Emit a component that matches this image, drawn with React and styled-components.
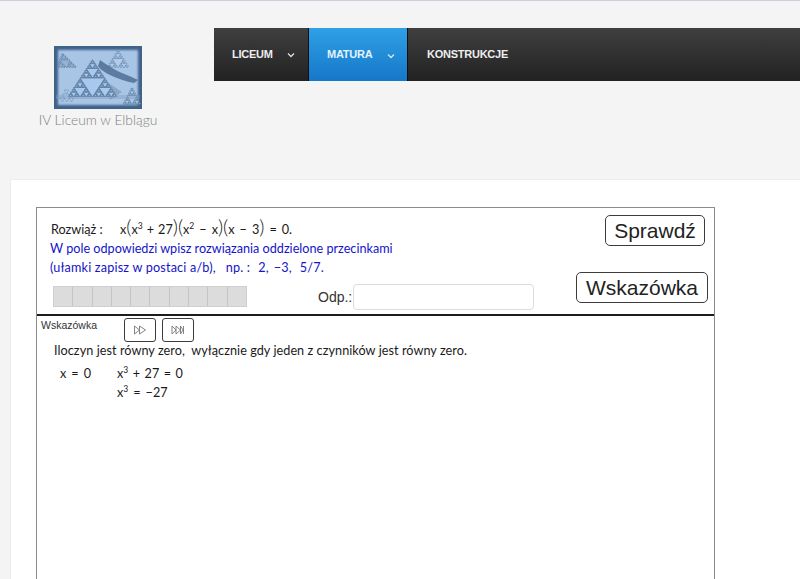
import React from "react";
import styled, { createGlobalStyle } from "styled-components";

const Global = createGlobalStyle`
  html, body { margin: 0; padding: 0; height: 579px; overflow: hidden; background: #f4f4f4; }
  #root { height: 579px; overflow: hidden; }
  * { box-sizing: border-box; }
`;

const Page = styled.div`
  width: 800px;
  height: 579px;
  border-top: 1px solid #c9d0dc;
  display: flex;
  flex-direction: column;
  overflow: hidden;
`;
const Header = styled.header`
  height: 178px;
  flex: none;
  display: flex;
  align-items: flex-start;
`;
const Brand = styled.div`
  width: 196px;
  flex: none;
  padding-top: 45px;
  display: flex;
  flex-direction: column;
  align-items: center;
`;
const LogoSvg = styled.svg`
  display: block;
  width: 88px;
  height: 63px;
`;
const BrandName = styled.div`
  font-family: Lato, sans-serif;
  font-weight: 300;
  font-size: 13.8px;
  line-height: 20px;
  color: #808080;
  white-space: nowrap;
  margin-top: 1px;
`;
const Nav = styled.nav`
  margin: 27px 0 0 18px;
  flex: 1;
  height: 53px;
  display: flex;
  background: linear-gradient(#3f3f3f, #222);
`;
const NavItem = styled.div`
  width: ${(p) => p.$w}px;
  flex: none;
  display: flex;
  align-items: center;
  padding-left: ${(p) => p.$pl}px;
  font-family: "Liberation Sans", Arial, sans-serif;
  font-weight: 700;
  font-size: 11px;
  letter-spacing: -0.25px;
  color: ${(p) => (p.$active ? "#e4f2ff" : "#eeeeee")};
  background: ${(p) => (p.$active ? "linear-gradient(#2fa0e6, #1677c9)" : "transparent")};
  border-right: ${(p) => (p.$sep ? "1px solid #0d0d0d" : "none")};
  padding-bottom: 1px;
`;
const Chevron = styled.svg`
  width: 8px;
  height: 6px;
  margin-left: ${(p) => p.$ml}px;
  margin-top: ${(p) => p.$mt}px;
  flex: none;
`;
const Content = styled.main`
  flex: 1;
  margin-left: 10px;
  background: #fff;
  border-top: 1px solid #ececec;
  border-left: 1px solid #ececec;
  padding: 27px 0 0 25px;
  min-height: 0;
`;
const Applet = styled.section`
  width: 679px;
  height: 420px;
  border: 1px solid #8c8c8c;
  display: flex;
  flex-direction: column;
  background: #fff;
`;
const Top = styled.div`
  height: 108px;
  flex: none;
  display: flex;
  border-bottom: 2px solid #1c1c1c;
`;
const Question = styled.div`
  width: 497px;
  flex: none;
  padding: 12px 0 0 13px;
  display: flex;
  flex-direction: column;
`;
const MathFont = styled.div`
  font-family: Lato, "Open Sans", sans-serif;
  font-size: 12.650px;
  line-height: 19px;
  height: 19px;
  white-space: pre;
  color: #1a1a1a;
`;
const Statement = styled(MathFont)`
  display: flex;
  align-items: baseline;
  margin-left: 1px;
`;
const Label = styled.span`
  width: 69px;
  flex: none;
`;
const Blue = styled(MathFont)`
  color: #1414c8;
  letter-spacing: ${(p) => p.$ls ?? 0}px;
`;
const Paren = styled.span`
  font-size: 20px;
  font-weight: 300;
  line-height: 10px;
`;
const Sup = styled.sup`
  font-size: 8.500px;
  line-height: 0;
  vertical-align: 5px;
`;
const Op = styled.span`
  margin: 0 ${(p) => p.$m ?? 3}px;
`;
const Gap = styled.span`
  margin-left: ${(p) => p.$w}px;
`;
const AnswerRow = styled.div`
  display: flex;
  align-items: center;
  margin: 7px 0 0 3px;
  height: 26px;
`;
const Cells = styled.div`
  display: flex;
  width: 194px;
  height: 21px;
  margin-bottom: 1px;
  flex: none;
  background: #dcdcdc;
  border: 1px solid #cfcfcf;
`;
const Cell = styled.div`
  flex: 1;
  border-right: 1px solid #c4c4c4;
  &:last-child { border-right: none; }
`;
const OdpLabel = styled.label`
  margin-left: 71px;
  width: 35px;
  font-family: "Liberation Sans", Arial, sans-serif;
  font-size: 14px;
  color: #333;
  flex: none;
`;
const AnswerInput = styled.div`
  width: 181px;
  height: 26px;
  flex: none;
  background: #fff;
  border: 1px solid #dcdcdc;
  border-radius: 4px;
`;
const Actions = styled.div`
  flex: 1;
  display: flex;
  flex-direction: column;
  align-items: flex-end;
  padding-top: 7px;
  gap: 26px;
`;
const BigButton = styled.div`
  width: ${(p) => p.$w}px;
  height: 31px;
  margin-right: ${(p) => p.$mr}px;
  border: 1px solid #3c3c3c;
  border-radius: 5px;
  background: #fff;
  font-family: "Liberation Sans", Arial, sans-serif;
  font-size: 21px;
  line-height: 29px;
  text-align: center;
  color: #222;
`;
const Hint = styled.div`
  flex: 1;
  padding: 2px 0 0 4px;
`;
const HintBar = styled.div`
  display: flex;
  align-items: flex-start;
  height: 23px;
`;
const HintTitle = styled.div`
  width: 83px;
  flex: none;
  font-family: "Liberation Sans", Arial, sans-serif;
  font-size: 10.500px;
  line-height: 13px;
  color: #333;
  padding-top: 1px;
`;
const StepButton = styled.div`
  width: ${(p) => p.$w}px;
  height: 24px;
  margin-right: 6px;
  border: 1px solid #3c3c3c;
  border-radius: 3px;
  display: flex;
  align-items: center;
  justify-content: center;
  flex: none;
`;
const Body = styled.div`
  padding: 0 0 0 13px;
`;
const Sentence = styled(MathFont)`
  height: 20px;
  line-height: 20px;
  margin-bottom: 3px;
  letter-spacing: 0.06px;
`;
const Work = styled.div`
  display: flex;
  padding-left: 6px;
`;
const WorkCol = styled.div`
  width: ${(p) => p.$w}px;
  flex: none;
  display: flex;
  flex-direction: column;
`;

const sierpinski = (ax, ay, bx, by, cx, cy, depth, out = []) => {
  const abx = (ax + bx) / 2, aby = (ay + by) / 2;
  const bcx = (bx + cx) / 2, bcy = (by + cy) / 2;
  const cax = (cx + ax) / 2, cay = (cy + ay) / 2;
  out.push(`M${abx} ${aby}L${bcx} ${bcy}L${cax} ${cay}Z`);
  if (depth > 1) {
    sierpinski(ax, ay, abx, aby, cax, cay, depth - 1, out);
    sierpinski(abx, aby, bx, by, bcx, bcy, depth - 1, out);
    sierpinski(cax, cay, bcx, bcy, cx, cy, depth - 1, out);
  }
  return out;
};

const Fractal = ({ pts, depth, fill, opacity }) => (
  <path
    d={sierpinski(...pts, depth).join("")}
    fill={fill}
    stroke="#54779c"
    strokeWidth="0.7"
    opacity={opacity}
  />
);

const Logo = () => (
  <LogoSvg viewBox="0 0 88 63">
    <defs>
      <filter id="soft" x="-5%" y="-5%" width="110%" height="110%"><feGaussianBlur stdDeviation="0.6" /></filter>
      <filter id="edge" x="-5%" y="-5%" width="110%" height="110%"><feGaussianBlur stdDeviation="1.100" /></filter>
      <clipPath id="inner"><rect width="88" height="63" /></clipPath>
    </defs>
    <g clipPath="url(#inner)">
      <rect width="88" height="63" fill="#3f6288" />
      <rect x="4" y="4" width="80" height="55" fill="#a8c5e6" filter="url(#edge)" />
      <g filter="url(#soft)">
        <Fractal pts={[64, 3, 52, 22, 76, 22]} depth={3} fill="#b4cfeb" opacity={0.7} />
        <Fractal pts={[8, 6, 2, 22, 24, 22]} depth={3} fill="#8fadcc" opacity={0.8} />
        <Fractal pts={[78, 40, 68, 59, 88, 59]} depth={3} fill="#a8c5e6" opacity={0.9} />
        <Fractal pts={[12, 40, 4, 56, 22, 56]} depth={2} fill="#b4cfeb" opacity={0.55} />
        <path d="M46 14Q60 24 68 27T84 34L80 37Q66 34 56 29T44 20Z" fill="#48698e" opacity="0.8" />
        <path d="M50 34L68 46L56 54Z" fill="#7997b7" opacity="0.65" />
        <path d="M2 49H86V53H2Z" fill="#7f9dbd" opacity="0.45" />
        <path d="M38.500 13L13.500 51H63.500Z" fill="#7693b4" />
        <Fractal pts={[38.5, 13, 13.5, 51, 63.5, 51]} depth={4} fill="#a9c9ec" />
      </g>
    </g>
  </LogoSvg>
);

const Down = ({ color = "#ddd", ml, mt = 0 }) => (
  <Chevron viewBox="0 0 8 6" $ml={ml} $mt={mt}>
    <path d="M1 1.500L4 4.500L7 1.500" fill="none" stroke={color} strokeWidth="1.300" />
  </Chevron>
);

const Play = () => (
  <svg width="14" height="10" viewBox="0 0 14 10" fill="none" stroke="#777" strokeWidth="0.9">
    <path d="M1.500 1V9L6.500 5ZM6.500 1V9L12.500 5Z" />
  </svg>
);
const PlayEnd = () => (
  <svg width="14" height="10" viewBox="0 0 14 10" fill="none" stroke="#777" strokeWidth="0.9">
    <path d="M1 1V9L5 5ZM5 1V9L9.500 5ZM9.500 1V9L12 5ZM12.500 1V9" />
  </svg>
);

export default function App() {
  return (
    <Page>
      <Global />
      <Header>
        <Brand>
          <Logo />
          <BrandName>IV Liceum w Elblągu</BrandName>
        </Brand>
        <Nav>
          <NavItem $w={95} $pl={18} $sep>LICEUM<Down ml={14} mt={2} /></NavItem>
          <NavItem $w={99} $pl={18} $active $sep>MATURA<Down color="#cfe8fb" ml={15} mt={3} /></NavItem>
          <NavItem $w={150} $pl={19}>KONSTRUKCJE</NavItem>
        </Nav>
      </Header>
      <Content>
        <Applet>
          <Top>
            <Question>
              <Statement>
                <Label>Rozwiąż :</Label>
                <span>
                  x<Paren>(</Paren>x<Sup>3</Sup><Op $m={4}>+</Op>27<Paren>)</Paren><Paren>(</Paren>x<Sup>2</Sup><Op $m={5}>−</Op>x<Paren>)</Paren><Paren>(</Paren>x<Op $m={5}>−</Op>3<Paren>)</Paren><Op $m={5}>=</Op>0.
                </span>
              </Statement>
              <Blue>W pole odpowiedzi wpisz rozwiązania oddzielone przecinkami</Blue>
              <Blue $ls={0.18}>(ułamki zapisz w postaci a/b),<Gap $w={10}>np. :</Gap><Gap $w={8}>2,</Gap><Gap $w={5}>−3,</Gap><Gap $w={8}>5/7.</Gap></Blue>
              <AnswerRow>
                <Cells>
                  {Array.from({ length: 10 }, (_, i) => <Cell key={i} />)}
                </Cells>
                <OdpLabel>Odp.:</OdpLabel>
                <AnswerInput />
              </AnswerRow>
            </Question>
            <Actions>
              <BigButton $w={100} $mr={9}>Sprawdź</BigButton>
              <BigButton $w={132} $mr={6}>Wskazówka</BigButton>
            </Actions>
          </Top>
          <Hint>
            <HintBar>
              <HintTitle>Wskazówka</HintTitle>
              <StepButton $w={32}><Play /></StepButton>
              <StepButton $w={32}><PlayEnd /></StepButton>
            </HintBar>
            <Body>
              <Sentence>Iloczyn jest równy zero,  wyłącznie gdy jeden z czynników jest równy zero.</Sentence>
              <Work>
                <WorkCol $w={57}><MathFont>x<Op $m={5}>=</Op>0</MathFont></WorkCol>
                <WorkCol $w={120}>
                  <MathFont>x<Sup>3</Sup><Op $m={4.500}>+</Op>27<Op $m={4.500}>=</Op>0</MathFont>
                  <MathFont>x<Sup>3</Sup><Op $m={5}>=</Op>−27</MathFont>
                </WorkCol>
              </Work>
            </Body>
          </Hint>
        </Applet>
      </Content>
    </Page>
  );
}
